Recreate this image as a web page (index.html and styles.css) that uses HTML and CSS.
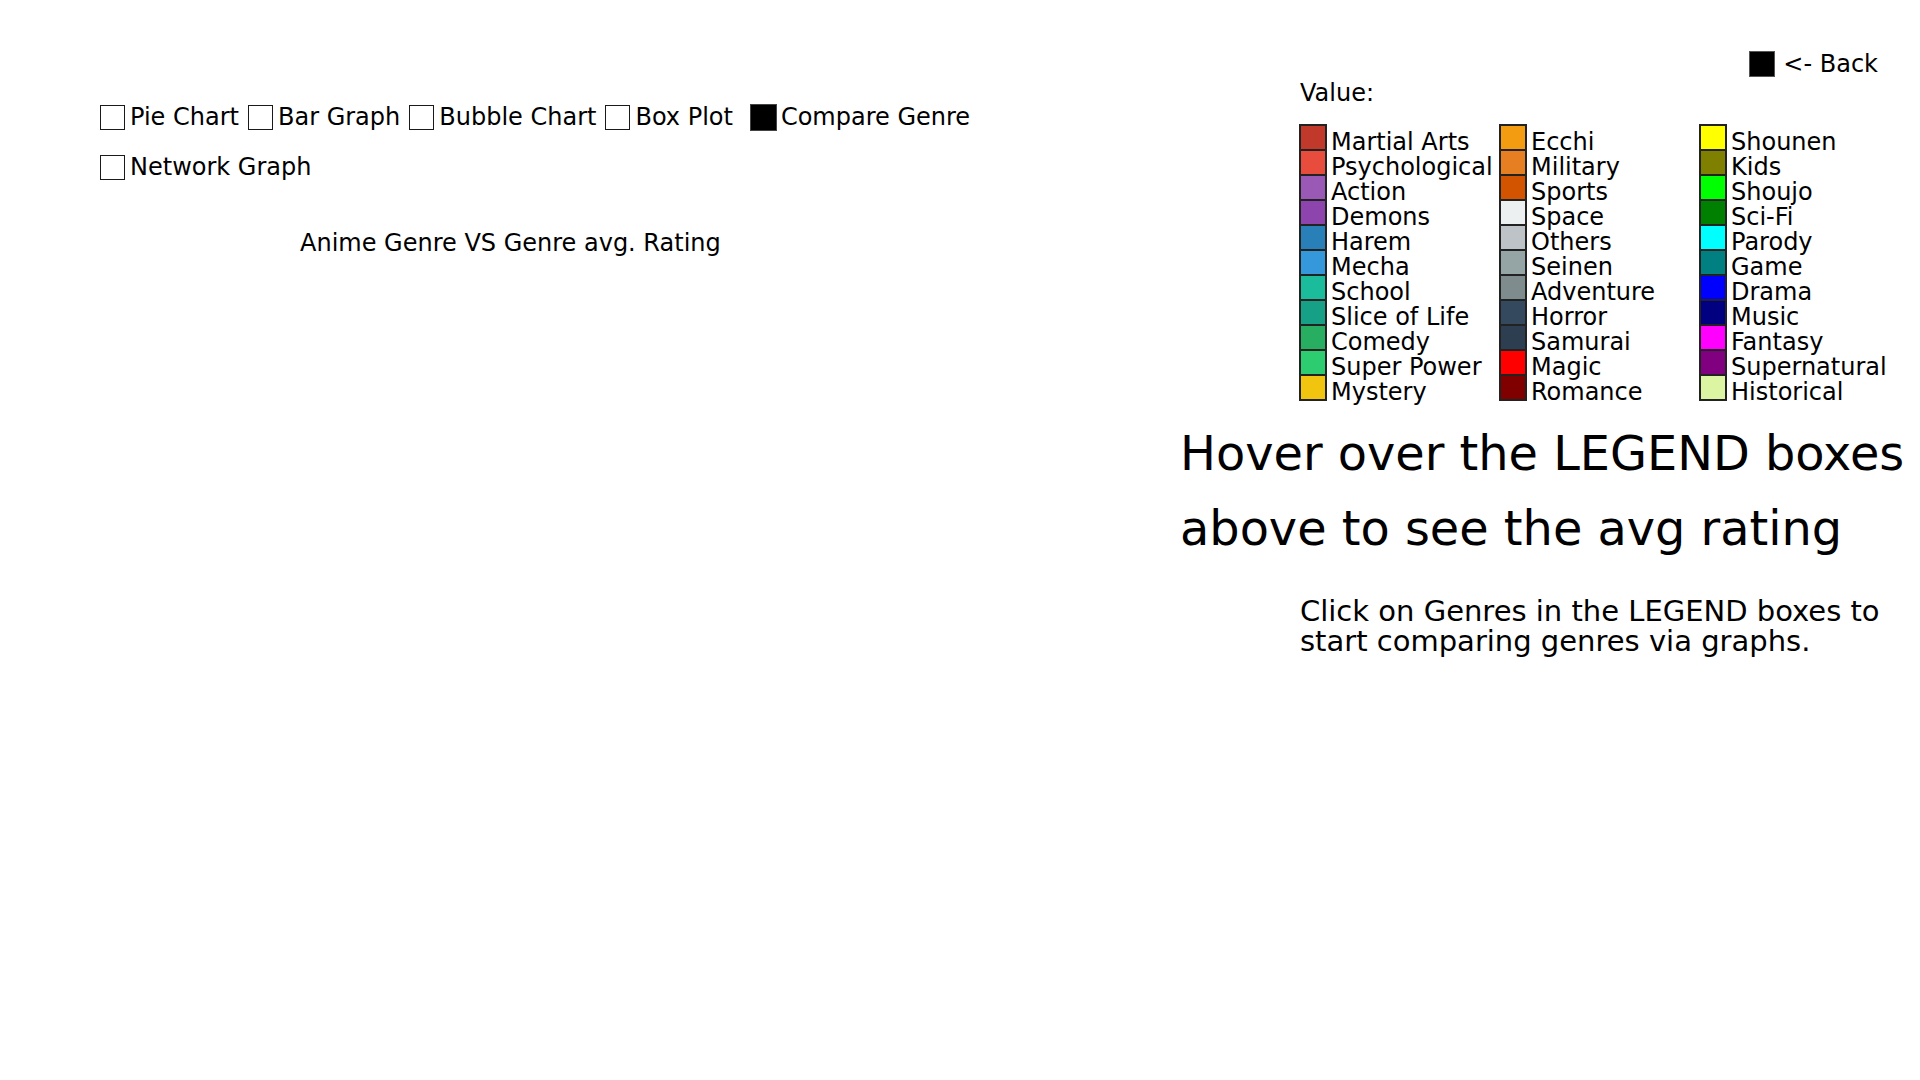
FILE: index.html
```html
<!DOCTYPE html>
<html lang="en">
<head>
<meta charset="utf-8">
<title>Anime Genre VS Genre avg. Rating</title>
<link rel="stylesheet" href="styles.css">
</head>
<body>
<div class="page">
  <section class="left">
    <div class="options">
      <label class="opt"><span class="cb"></span>Pie Chart</label>
      <label class="opt"><span class="cb"></span>Bar Graph</label>
      <label class="opt"><span class="cb"></span>Bubble Chart</label>
      <label class="opt"><span class="cb"></span>Box Plot</label>
      <label class="opt opt-on"><span class="cb cb-on"></span>Compare Genre</label>
      <label class="opt"><span class="cb"></span>Network Graph</label>
    </div>
    <div class="title">Anime Genre VS Genre avg. Rating</div>
  </section>
  <section class="right">
    <div class="back-row">
      <span class="back-box"></span><span class="back-text">&lt;- Back</span>
    </div>
    <div class="value-label">Value:</div>
    <div class="legend">
      <div class="col col1">
        <div class="item"><span class="sw" style="background:#c0392b"></span><span class="lbl">Martial Arts</span></div>
        <div class="item"><span class="sw" style="background:#e74c3c"></span><span class="lbl">Psychological</span></div>
        <div class="item"><span class="sw" style="background:#9b59b6"></span><span class="lbl">Action</span></div>
        <div class="item"><span class="sw" style="background:#8e44ad"></span><span class="lbl">Demons</span></div>
        <div class="item"><span class="sw" style="background:#2980b9"></span><span class="lbl">Harem</span></div>
        <div class="item"><span class="sw" style="background:#3498db"></span><span class="lbl">Mecha</span></div>
        <div class="item"><span class="sw" style="background:#1abc9c"></span><span class="lbl">School</span></div>
        <div class="item"><span class="sw" style="background:#16a085"></span><span class="lbl">Slice of Life</span></div>
        <div class="item"><span class="sw" style="background:#27ae60"></span><span class="lbl">Comedy</span></div>
        <div class="item"><span class="sw" style="background:#2ecc71"></span><span class="lbl">Super Power</span></div>
        <div class="item"><span class="sw" style="background:#f1c40f"></span><span class="lbl">Mystery</span></div>
      </div>
      <div class="col col2">
        <div class="item"><span class="sw" style="background:#f39c12"></span><span class="lbl">Ecchi</span></div>
        <div class="item"><span class="sw" style="background:#e67e22"></span><span class="lbl">Military</span></div>
        <div class="item"><span class="sw" style="background:#d35400"></span><span class="lbl">Sports</span></div>
        <div class="item"><span class="sw" style="background:#ecf0f1"></span><span class="lbl">Space</span></div>
        <div class="item"><span class="sw" style="background:#bdc3c7"></span><span class="lbl">Others</span></div>
        <div class="item"><span class="sw" style="background:#95a5a6"></span><span class="lbl">Seinen</span></div>
        <div class="item"><span class="sw" style="background:#7f8c8d"></span><span class="lbl">Adventure</span></div>
        <div class="item"><span class="sw" style="background:#34495e"></span><span class="lbl">Horror</span></div>
        <div class="item"><span class="sw" style="background:#2c3e50"></span><span class="lbl">Samurai</span></div>
        <div class="item"><span class="sw" style="background:#ff0000"></span><span class="lbl">Magic</span></div>
        <div class="item"><span class="sw" style="background:#800000"></span><span class="lbl">Romance</span></div>
      </div>
      <div class="col col3">
        <div class="item"><span class="sw" style="background:#ffff00"></span><span class="lbl">Shounen</span></div>
        <div class="item"><span class="sw" style="background:#808000"></span><span class="lbl">Kids</span></div>
        <div class="item"><span class="sw" style="background:#00ff00"></span><span class="lbl">Shoujo</span></div>
        <div class="item"><span class="sw" style="background:#008000"></span><span class="lbl">Sci-Fi</span></div>
        <div class="item"><span class="sw" style="background:#00ffff"></span><span class="lbl">Parody</span></div>
        <div class="item"><span class="sw" style="background:#008080"></span><span class="lbl">Game</span></div>
        <div class="item"><span class="sw" style="background:#0000ff"></span><span class="lbl">Drama</span></div>
        <div class="item"><span class="sw" style="background:#000080"></span><span class="lbl">Music</span></div>
        <div class="item"><span class="sw" style="background:#ff00ff"></span><span class="lbl">Fantasy</span></div>
        <div class="item"><span class="sw" style="background:#800080"></span><span class="lbl">Supernatural</span></div>
        <div class="item"><span class="sw" style="background:#dcf5a3"></span><span class="lbl">Historical</span></div>
      </div>
    </div>
    <h1 class="hover-msg">Hover over the LEGEND boxes above to see the avg rating</h1>
    <p class="click-msg">Click on Genres in the LEGEND boxes to start comparing genres via graphs.</p>
  </section>
</div>
</body>
</html>
```

FILE: styles.css
```css
html, body {
  margin: 0;
  padding: 0;
  background: #ffffff;
}

body {
  font-family: "DejaVu Sans", "Liberation Sans", sans-serif;
  color: #000000;
  font-size: 24px;
}

.page {
  display: flex;
  width: 1920px;
  height: 1080px;
}

.left {
  width: 1080px;
  padding-left: 100px;
  padding-top: 92px;
}

.options {
  display: flex;
  flex-wrap: wrap;
  width: 960px;
  column-gap: 9px;
}

.opt {
  display: flex;
  align-items: center;
  height: 50px;
  line-height: 30px;
  white-space: nowrap;
}

.opt-on {
  margin-left: 8px;
}

.cb {
  display: inline-block;
  width: 25px;
  height: 25px;
  box-sizing: border-box;
  border: 1.5px solid #1a1a1a;
  background: #ffffff;
  margin-right: 5px;
}

.cb-on {
  width: 27px;
  height: 27px;
  background: #000000;
  border-color: #444444;
  margin-right: 4px;
}

.title {
  margin-top: 36px;
  padding-left: 200px;
  line-height: 30px;
}

.right {
  width: 740px;
  padding-top: 51px;
}

.back-row {
  display: flex;
  align-items: center;
  justify-content: flex-end;
  height: 26px;
  padding-right: 42px;
}

.back-box {
  display: inline-block;
  width: 26px;
  height: 26px;
  box-sizing: border-box;
  background: #000000;
  border: 1px solid #555555;
  margin-right: 8px;
}

.back-text {
  line-height: 26px;
}

.value-label {
  margin-top: 2px;
  margin-left: 120px;
  line-height: 28px;
}

.legend {
  display: flex;
  margin-top: 18px;
  margin-left: 120px;
}

.col {
  width: 200px;
}

.item {
  display: flex;
  align-items: flex-start;
  height: 25px;
  white-space: nowrap;
}

.lbl {
  line-height: 25px;
  margin-top: 5px;
}

.sw {
  display: inline-block;
  width: 26px;
  height: 25px;
  box-sizing: border-box;
  outline: 2px solid #222222;
  outline-offset: -1px;
  margin-right: 5px;
  flex: none;
}

.hover-msg {
  margin: 16px 0 0 0;
  font-size: 47.8px;
  font-weight: normal;
  line-height: 75px;
}

.click-msg {
  margin: 30px 0 0 120px;
  font-size: 29px;
  line-height: 30px;
}
```
